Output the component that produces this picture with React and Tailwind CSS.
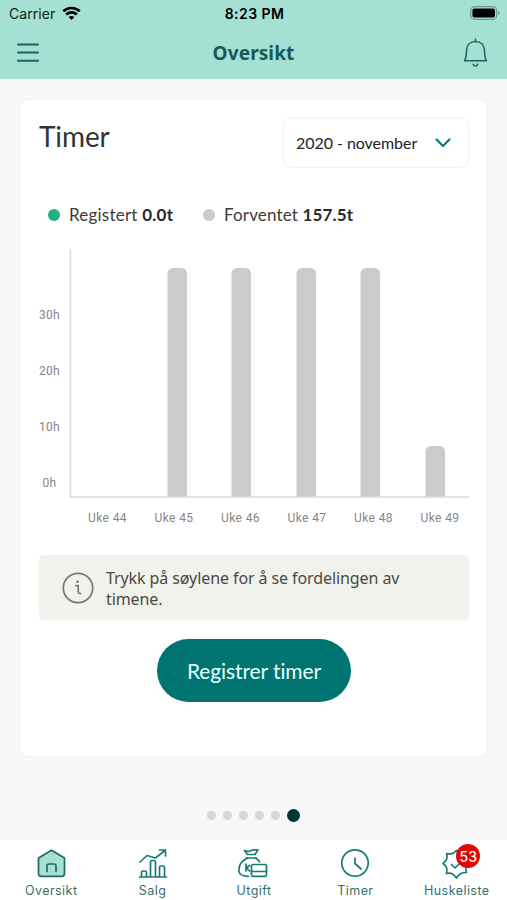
import React from "react";

const BARS = [
  { x: 98, top: 228 },
  { x: 162, top: 228 },
  { x: 227, top: 228 },
  { x: 291, top: 228 },
  { x: 356, top: 50 },
];
const WEEKS = [44, 45, 46, 47, 48, 49];

function StatusBar() {
  return (
    <div className="flex h-7 items-center justify-between pl-[9px] pr-[7px] font-['Inter',sans-serif] text-[14px] leading-7 text-[#10201c]">
      <div className="flex w-[120px] items-center gap-[6px]">
        <span className="w-[47px] whitespace-nowrap text-[14px] tracking-[0.05px]">Carrier</span>
        <svg width="19" height="15" viewBox="0 0 19 15" fill="none" stroke="#000" strokeWidth="2.7" className="-mt-[2px]">
          <path d="M1.3 5.2C6 .9 13 .9 17.7 5.2" />
          <path d="M4.2 8.4C7.2 5.7 11.8 5.7 14.8 8.4" />
          <path d="M9.5 14 6.6 11.1C8.2 9.6 10.8 9.6 12.4 11.1Z" fill="#000" stroke="none" />
        </svg>
      </div>
      <span className="whitespace-nowrap font-semibold tracking-[0.45px] text-black">8:23 PM</span>
      <div className="flex w-[120px] justify-end">
        <svg width="30" height="14" viewBox="0 0 30 14" className="-mt-[2px]">
          <rect x=".7" y=".7" width="26" height="12.6" rx="3.8" fill="none" stroke="#6c9a8d" strokeWidth="1.2" />
          <rect x="2.4" y="2.4" width="22.6" height="9.2" rx="2" fill="#000" />
          <path d="M28 4.8c2 .8 2 3.6 0 4.400Z" fill="#6c9a8d" />
        </svg>
      </div>
    </div>
  );
}

function NavBar() {
  return (
    <div className="flex h-[49px] items-center justify-between pl-[17px] pr-[19px]">
      <svg width="22" height="20" viewBox="0 0 22 20" stroke="#1d6262" strokeWidth="2" strokeLinecap="round">
        <path d="M1 1.500H21M1 9.500H21M1 17.800H21" />
      </svg>
      <h1 className="pl-[5px] font-['Noto_Sans',sans-serif] text-[19px] font-bold leading-6 tracking-[0.1px] text-[#16595a]">Oversikt</h1>
      <svg width="25" height="30" viewBox="0 0 25 30" fill="none" stroke="#1d6262" strokeWidth="1.5" strokeLinecap="round" strokeLinejoin="round">
        <path d="M12.500 1V3.400M1.500 22.800H23.500C21.600 20 21.700 17 21.500 12.500C21.300 6.800 17.600 3.400 12.500 3.400S3.700 6.800 3.500 12.500C3.300 17 3.400 20 1.500 22.800Z" />
        <path d="M10.200 26.200C11 28.600 14 28.600 14.800 26.200" />
      </svg>
    </div>
  );
}

function Chart() {
  return (
    <svg width="431" height="280" viewBox="0 0 431 280" className="mt-[22px] -mr-px block shrink-0">
      <g fontFamily="Roboto, sans-serif" fontSize="12" letterSpacing="0.200" fill="#858585">
        <text x="0" y="69.500">30h</text>
        <text x="0" y="125.500">20h</text>
        <text x="0" y="181.500">10h</text>
        <text x="3.500" y="237.500">0h</text>
      </g>
      <g fill="#cbcbcb">
        {BARS.map((b) => (
          <path key={b.x} d={`M${b.x + 30.500} 248V${254 - b.top - 1}q0 -6 6 -6h7.500q6 0 6 6V248Z`} />
        ))}
      </g>
      <path d="M31.500 0.500V248H430.500" fill="none" stroke="#dcdcdc" strokeWidth="1.700" />
      <g fontFamily="Roboto, sans-serif" fontSize="12" letterSpacing="0.400" fill="#858585" textAnchor="middle">
        {WEEKS.map((w, i) => (
          <text key={w} x={68.500 + i * 66.500} y="273">{`Uke ${w}`}</text>
        ))}
      </g>
    </svg>
  );
}

function TimerCard() {
  return (
    <section className="mx-[19px] mt-5 flex h-[658px] flex-col rounded-lg border border-[#f1f1f1] bg-white px-[19px] pt-[17px]">
      <div className="flex items-start justify-between">
        <h2 className="font-['Lato',sans-serif] text-[28px] leading-[38px] tracking-[-0.1px] text-[#343434]">Timer</h2>
        <div className="-mr-px flex h-[51px] w-[186px] items-center justify-between rounded-lg border-[1.500px] border-[#f1f1f1] pl-[12px] pr-[17px]">
          <span className="whitespace-nowrap font-['Lato',sans-serif] text-[16px] tracking-[-0.05px] text-[#222]">2020 - november</span>
          <svg width="16" height="10" viewBox="0 0 16 10" fill="none" stroke="#087b78" strokeWidth="2.200" strokeLinecap="round" strokeLinejoin="round">
            <path d="M1.500 1.500 8 8 14.500 1.500" />
          </svg>
        </div>
      </div>
      <div className="mt-[35px] flex h-6 items-center whitespace-nowrap pl-[9px] font-['Lato',sans-serif] text-[17px] leading-6 text-[#3c3c3c]">
        <span className="mr-[9px] size-3 rounded-full bg-[#25b083]" />
        <span className="w-[134px] tracking-[0.22px]">Registert <b className="text-[#292929]">0.0t</b></span>
        <span className="mr-[9px] size-3 rounded-full bg-[#cbcbcb]" />
        <span className="tracking-[0.15px]">Forventet <b className="text-[#292929]">157.5t</b></span>
      </div>
      <Chart />
      <div className="mt-[26px] flex h-[65px] w-[430px] shrink-0 items-center rounded-[5px] bg-[#f1f2eb] pl-[23px]">
        <svg width="32" height="32" viewBox="0 0 32 32" fill="none" stroke="#77776f" strokeWidth="1.700">
          <circle cx="16" cy="16" r="14.700" />
          <path d="M13.200 13.700H16.200V19.700Q16.200 21.800 19.200 21.500" />
          <circle cx="15.600" cy="9.800" r="1.300" fill="#77776f" stroke="none" />
        </svg>
        <p className="ml-[12px] whitespace-nowrap pt-[2px] font-['Noto_Sans',sans-serif] text-[16px] leading-[21px] tracking-[-0.09px] text-[#494945]">
          Trykk på søylene for å se fordelingen av<br />timene.
        </p>
      </div>
      <button className="ml-[118px] mt-[19px] h-[63px] w-[194px] shrink-0 whitespace-nowrap rounded-full bg-[#007471] font-['Lato',sans-serif] text-[21px] tracking-[-0.1px] text-[#e8fffa]">
        Registrer timer
      </button>
    </section>
  );
}

const icon = { width: 34, height: 34, viewBox: "0 0 34 34", fill: "none", stroke: "#177b77", strokeWidth: 1.7, strokeLinecap: "round", strokeLinejoin: "round" };

function HomeIcon() {
  return (
    <svg {...icon} stroke="#236a65">
      <path d="M17.500 4.200 30.500 12V27.500Q30.500 30.300 27.700 30.300H7.300Q4.500 30.300 4.500 27.500V12Z" fill="#a5e1d2" />
      <path d="M13 25.500V20Q13 18 15 18H20Q22 18 22 20V25.500" />
    </svg>
  );
}
function SalesIcon() {
  return (
    <svg {...icon}>
      <path d="M4.500 31H31.500M6.500 31V26.500Q6.500 25 8 25H10Q11.500 25 11.500 26.500V31M15.500 31V16Q15.500 14.500 17 14.500H19Q20.500 14.500 20.500 16V31M24.500 31V21.500Q24.500 20 26 20H28Q29.500 20 29.500 21.500V31" />
      <path d="M5 16 12 9.500 20.500 12 30.500 4M24.500 4H30.500V10" />
    </svg>
  );
}
function ExpenseIcon() {
  return (
    <svg {...icon}>
      <path d="M11.500 8.500 8.500 4.500 13 5.500 17 3.800H22L19 8.500ZM10 12H20.500" />
      <path d="M11.500 12C5.500 15 2.500 20 3 25C3.400 29 6 30.300 12.500 30.300M19.500 12Q22 13.200 23.500 15.700M10 18V25M13.500 19.500 10.500 22 13.500 25" />
      <rect x="15.500" y="18.500" width="15" height="11.800" rx="1.500" />
      <path d="M15.500 25.500H30.500" />
    </svg>
  );
}
function ClockIcon() {
  return (
    <svg {...icon}>
      <circle cx="17" cy="17" r="13.200" />
      <path d="M17 12V17.500L23 23" />
    </svg>
  );
}
function TaskIcon() {
  return (
    <svg {...icon}>
      <path d="M17.500 4.500C19.300 7.800 20.800 8.400 25.300 7.500C24.400 12 25.200 13.500 30.500 17.500C26.500 20 26 21.500 27.500 26.500C22.500 26.500 20.500 27.500 17.500 32C14.500 27.500 12.500 26.500 7.500 27.500C8.500 22.500 8 20.500 4 17.500C8 14.500 8.500 12.500 7.700 7.700C12.500 8.400 14.500 7.800 17.500 4.500Z" />
      <path d="M12.500 18.500 16 22 22 16" />
    </svg>
  );
}

const TABS = [
  { label: "Oversikt", Icon: HomeIcon },
  { label: "Salg", Icon: SalesIcon },
  { label: "Utgift", Icon: ExpenseIcon },
  { label: "Timer", Icon: ClockIcon },
  { label: "Huskeliste", Icon: TaskIcon, badge: 53 },
];

function TabBar() {
  return (
    <nav className="grid h-[60px] shrink-0 grid-cols-5 bg-white">
      {TABS.map(({ label, Icon, badge }) => (
        <div key={label} className="flex flex-col items-center pt-[6px]">
          <div className="relative h-9">
            <Icon />
            {badge && (
              <span className="absolute -top-[2px] left-[17px] flex size-6 items-center justify-center rounded-full bg-[#e10600] font-['Inter',sans-serif] text-[14px] font-medium text-white">{badge}</span>
            )}
          </div>
          <span className="whitespace-nowrap pl-px font-['Inter',sans-serif] text-[12.500px] leading-[18px] tracking-[0.45px] text-[#34706a]">{label}</span>
        </div>
      ))}
    </nav>
  );
}

export default function App() {
  return (
    <main className="flex h-[900px] w-[507px] flex-col overflow-hidden bg-[#f7f7f7]">
      <header className="h-[79px] shrink-0 bg-[#a5e1d2]">
        <StatusBar />
        <NavBar />
      </header>
      <TimerCard />
      <div className="flex flex-1 items-center justify-center gap-[7px] pt-[34px]">
        {[0, 1, 2, 3, 4].map((n) => (
          <span key={n} className="size-[9px] rounded-full bg-[#d8d8d8]" />
        ))}
        <span className="size-[13px] rounded-full bg-[#00343b]" />
      </div>
      <TabBar />
    </main>
  );
}
